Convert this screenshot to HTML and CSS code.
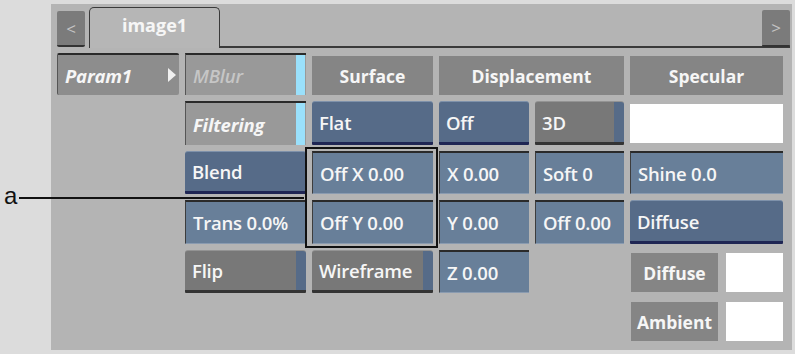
FILE: index.html
```html
<!DOCTYPE html>
<html lang="en">
<head>
    <meta charset="UTF-8">
    <title>image1 - Param1</title>
    <link rel="stylesheet" href="styles.css">
</head>
<body>
    <div class="page">
        <div class="callout">
            <span class="callout-label">a</span>
            <span class="callout-line"></span>
        </div>

        <div class="panel">
            <div class="tabbar">
                <button class="nav">&lt;</button>
                <div class="tab">image1</div>
                <div class="tab-rest">
                    <button class="nav">&gt;</button>
                </div>
            </div>

            <div class="grid">
                <!-- row 1 -->
                <div class="btn menu">Param1 <span class="arrow"></span></div>
                <div class="btn toggle dim">MBlur</div>
                <div class="head">Surface</div>
                <div class="head span2">Displacement</div>
                <div class="head">Specular</div>

                <!-- row 2 -->
                <div class="btn toggle c2">Filtering</div>
                <div class="btn blue">Flat</div>
                <div class="btn blue">Off</div>
                <div class="btn gray">3D</div>
                <div class="swatch"></div>

                <!-- row 3 -->
                <div class="btn blue c2">Blend</div>
                <div class="field">Off X 0.00</div>
                <div class="field">X 0.00</div>
                <div class="field">Soft 0</div>
                <div class="field">Shine 0.0</div>

                <!-- row 4 -->
                <div class="field c2">Trans 0.0%</div>
                <div class="field">Off Y 0.00</div>
                <div class="field">Y 0.00</div>
                <div class="field">Off 0.00</div>
                <div class="btn blue">Diffuse</div>

                <!-- row 5 -->
                <div class="btn gray c2">Flip</div>
                <div class="btn gray">Wireframe</div>
                <div class="field">Z 0.00</div>
                <div class="colour c6">
                    <span class="colour-label">Diffuse</span>
                    <span class="colour-box"></span>
                </div>

                <!-- row 6 -->
                <div class="colour c6">
                    <span class="colour-label">Ambient</span>
                    <span class="colour-box"></span>
                </div>
            </div>
        </div>

        <div class="focus"></div>
    </div>
</body>
</html>
```

FILE: styles.css
```css
:root {
    --page-bg: #dcdcdc;
    --panel-bg: #b4b4b4;
    --dark-edge: #2a2a2a;
    --head-bg: #858585;
    --gray-btn: #787878;
    --blue-btn: #566b88;
    --blue-edge: #1f2654;
    --field-bg: #687f99;
    --strip-blue: #9ae0fb;
    --text: #f6f6f6;
    --ui-font: "Open Sans", "DejaVu Sans", sans-serif;
}

* {
    box-sizing: border-box;
}

body {
    margin: 0;
    background-color: var(--page-bg);
    font-family: var(--ui-font);
}

.page {
    position: relative;
    width: 795px;
    height: 354px;
    padding: 4px 0 0 51px;
}

.panel {
    width: 741px;
    height: 346px;
    background-color: var(--panel-bg);
}

/* tab row */

.tabbar {
    display: flex;
    align-items: flex-end;
    height: 44px;
    padding: 0 2px 0 6px;
}

.nav {
    width: 28px;
    height: 36px;
    margin-bottom: 1px;
    padding: 0;
    border: none;
    border-radius: 2px;
    border-bottom: 2px solid #333;
    background-color: #7b7b7b;
    color: #c4c4c4;
    font-family: var(--ui-font);
    font-size: 17px;
}

.tab {
    width: 131px;
    height: 41px;
    margin-left: 4px;
    padding-top: 5px;
    border: 1px solid #3a3a3a;
    border-bottom: none;
    border-radius: 5px 5px 0 0;
    background-color: #b6b6b6;
    color: var(--text);
    font-size: 18px;
    font-weight: 700;
    text-align: center;
}

.tab-rest {
    flex: 1;
    display: flex;
    justify-content: flex-end;
    align-items: flex-end;
    height: 38px;
    border-bottom: 2px solid #3a3a3a;
}

.tab-rest .nav {
    height: 37px;
    margin: 0 0 -1px;
}

/* control grid */

.grid {
    display: grid;
    grid-template-columns: 122px 121px 121px 90px 89px 153px;
    grid-template-rows: 42px 44px 43px 44px 43px 39px;
    column-gap: 6px;
    row-gap: 6px;
    margin-top: 5px;
    padding-left: 6px;
    font-size: 18.5px;
    font-weight: 600;
    color: var(--text);
}

.c2 {
    grid-column: 2;
}

.c6 {
    grid-column: 6;
}

.span2 {
    grid-column: span 2;
}

.btn,
.field {
    display: flex;
    align-items: center;
    padding-left: 7px;
    white-space: nowrap;
    letter-spacing: -0.2px;
}

.head {
    display: flex;
    align-items: center;
    justify-content: center;
    align-self: end;
    height: 39px;
    background-color: var(--head-bg);
    font-size: 17.5px;
    font-weight: 700;
}

.menu {
    position: relative;
    border-top: 2px solid var(--dark-edge);
    border-left: 1px solid #555;
    border-radius: 2px;
    background-color: #8d8d8d;
    font-style: italic;
    font-weight: 700;
}

.arrow {
    position: absolute;
    right: 3px;
    top: 13px;
    border-top: 7px solid transparent;
    border-bottom: 7px solid transparent;
    border-left: 8px solid #f0f0f0;
}

.toggle {
    border-top: 2px solid var(--dark-edge);
    border-left: 1px solid #555;
    background: linear-gradient(to left, #999 1px, var(--strip-blue) 1px, var(--strip-blue) 10px, #999 10px);
    font-style: italic;
    font-weight: 700;
}

.toggle.dim {
    color: #c6c6c6;
    font-weight: 600;
}

.blue {
    border-top: 1px solid #7e91aa;
    border-bottom: 3px solid var(--blue-edge);
    border-radius: 3px 3px 1px 1px;
    background-color: var(--blue-btn);
}

.gray {
    border-top: 1px solid #939393;
    border-bottom: 3px solid #343434;
    border-radius: 3px 3px 1px 1px;
    background: linear-gradient(to left, var(--blue-btn) 10px, var(--gray-btn) 10px);
}

.field {
    border-top: 2px solid var(--dark-edge);
    border-left: 1px solid #3d3d3d;
    border-bottom: 1px solid #8a9bb0;
    background-color: var(--field-bg);
}

.swatch {
    margin: 3px 0 2px;
    background-color: #fff;
}

.colour {
    display: flex;
    gap: 8px;
    margin: 3px 0 0 1px;
    height: 39px;
}

.colour-label {
    display: flex;
    align-items: center;
    justify-content: center;
    width: 87px;
    background-color: var(--head-bg);
    font-size: 17.5px;
    font-weight: 700;
}

.colour-box {
    flex: 1;
    background-color: #fff;
}

/* annotation overlay */

.callout {
    position: absolute;
    left: 4px;
    top: 182px;
    display: flex;
    align-items: center;
}

.callout-label {
    font-family: "Liberation Sans", sans-serif;
    font-size: 24px;
    line-height: 28px;
    color: #111;
}

.callout-line {
    width: 285px;
    height: 2px;
    margin-left: 2px;
    margin-top: 3px;
    background-color: #111;
}

.focus {
    position: absolute;
    left: 305px;
    top: 147px;
    width: 133px;
    height: 101px;
    border: 2px solid #111;
}
```
